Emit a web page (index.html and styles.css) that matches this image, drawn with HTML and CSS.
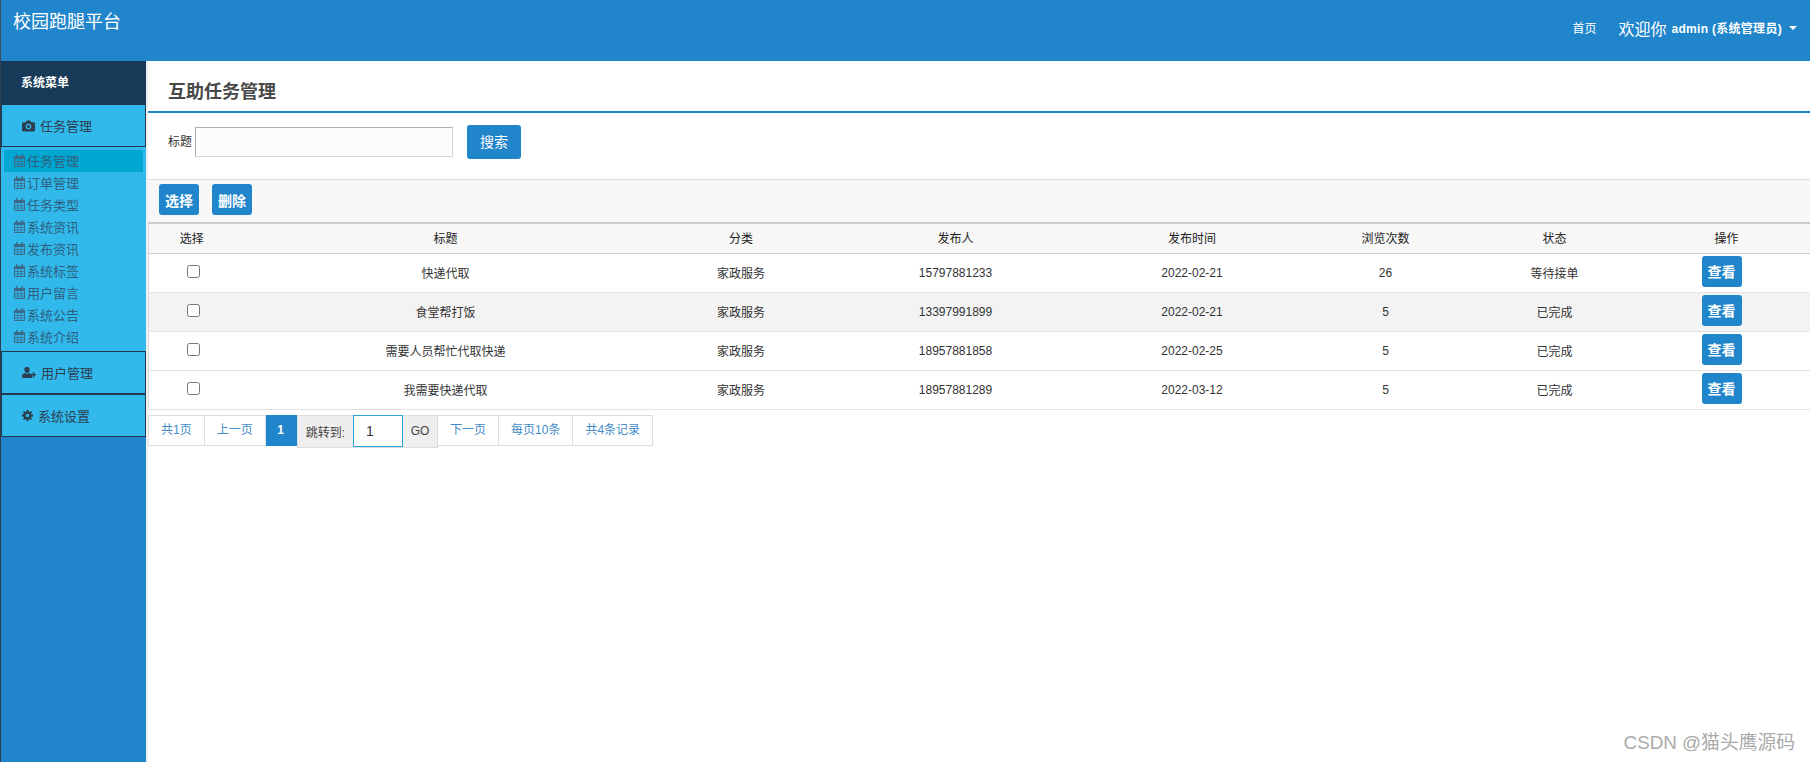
FILE: index.html
```html
<!DOCTYPE html>
<html lang="zh-CN">
<head>
    <meta charset="UTF-8">
    <title>校园跑腿平台</title>
    <link rel="stylesheet" href="styles.css">
</head>
<body>
    <svg class="icon-defs" width="0" height="0">
        <symbol id="i-cal" viewBox="0 0 11 13">
            <path d="M.5 2.500h10v10H.5z" fill="none" stroke="currentColor"/>
            <path d="M0 2h11v3H0z" fill="currentColor"/>
            <path d="M.5 7.500h10M.5 10h10M3.800 5v7.500M7.200 5v7.500" fill="none" stroke="currentColor" stroke-width=".8"/>
            <path d="M2 0h1.500v2H2zM7.500 0H9v2H7.500z" fill="currentColor"/>
        </symbol>
    </svg>

    <header class="topbar">
        <div class="brand">校园跑腿平台</div>
        <div class="top-right">
            <a class="top-link">首页</a>
            <span class="welcome">欢迎你</span>
            <span class="user">admin (系统管理员)</span>
            <span class="caret"></span>
        </div>
    </header>

    <div class="wrap">
        <aside class="sidebar">
            <div class="side-title">系统菜单</div>
            <div class="side-group">
                <svg class="g-icon" width="13" height="12" viewBox="0 0 14 12"><path fill-rule="evenodd" d="M1.500 2H4l1-2h4l1 2h2.500A1.500 1.500 0 0 1 14 3.500v7a1.500 1.500 0 0 1-1.500 1.500h-11A1.500 1.500 0 0 1 0 10.500v-7A1.500 1.500 0 0 1 1.500 2zM7 3.500a3 3 0 1 0 0 6 3 3 0 0 0 0-6zm0 1.300a1.700 1.700 0 1 1 0 3.400 1.700 1.700 0 0 1 0-3.400z" fill="currentColor"/></svg>
                <span>任务管理</span>
            </div>
            <ul class="side-list">
                <li class="active"><svg class="cal"><use href="#i-cal"/></svg>任务管理</li>
                <li><svg class="cal"><use href="#i-cal"/></svg>订单管理</li>
                <li><svg class="cal"><use href="#i-cal"/></svg>任务类型</li>
                <li><svg class="cal"><use href="#i-cal"/></svg>系统资讯</li>
                <li><svg class="cal"><use href="#i-cal"/></svg>发布资讯</li>
                <li><svg class="cal"><use href="#i-cal"/></svg>系统标签</li>
                <li><svg class="cal"><use href="#i-cal"/></svg>用户留言</li>
                <li><svg class="cal"><use href="#i-cal"/></svg>系统公告</li>
                <li><svg class="cal"><use href="#i-cal"/></svg>系统介绍</li>
            </ul>
            <div class="side-group">
                <svg class="g-icon" width="14" height="11" viewBox="0 0 14 11"><path d="M5 0a2.600 2.600 0 0 1 2.600 2.800C7.600 4.500 6.500 6 5 6S2.400 4.500 2.400 2.800A2.600 2.600 0 0 1 5 0zM0 9.500c0-2 1.300-3 2.700-3.400.6.500 1.400.8 2.300.8s1.700-.3 2.300-.8c.6.200 1.100.4 1.500.8v1.300H10V11H1.500C.6 11 0 10.400 0 9.500zM10.800 5h1.400v2H14v1.400h-1.800v2h-1.400v-2H9V7h1.800z" fill="currentColor"/></svg>
                <span>用户管理</span>
            </div>
            <div class="side-group">
                <svg class="g-icon" width="11" height="11" viewBox="0 0 12 12"><path fill-rule="evenodd" d="M5 0h2l.3 1.700 1 .4L9.800 1.100l1.100 1.100-1 1.500.4 1L12 5v2l-1.700.3-.4 1 1 1.500-1.100 1.100-1.500-1-1 .4L7 12H5l-.3-1.700-1-.4-1.500 1-1.100-1.100 1-1.500-.4-1L0 7V5l1.700-.3.4-1-1-1.500 1.100-1.100 1.500 1 1-.4zM6 4a2 2 0 1 0 0 4 2 2 0 0 0 0-4z" fill="currentColor"/></svg>
                <span>系统设置</span>
            </div>
        </aside>

        <main class="content">
            <h2 class="page-title">互助任务管理</h2>

            <form class="search-row">
                <label class="search-label">标题</label>
                <input class="search-input" type="text">
                <button type="button" class="btn btn-search">搜索</button>
            </form>

            <div class="toolbar">
                <button type="button" class="btn btn-bold">选择</button>
                <button type="button" class="btn btn-bold">删除</button>
            </div>

            <table class="data-table">
                <colgroup>
                    <col class="c1"><col class="c2"><col class="c3"><col class="c4">
                    <col class="c5"><col class="c6"><col class="c7"><col class="c8">
                </colgroup>
                <thead>
                    <tr>
                        <th>选择</th><th>标题</th><th>分类</th><th>发布人</th>
                        <th>发布时间</th><th>浏览次数</th><th>状态</th><th>操作</th>
                    </tr>
                </thead>
                <tbody>
                    <tr>
                        <td><input class="check" type="checkbox"></td>
                        <td>快递代取</td><td>家政服务</td><td>15797881233</td>
                        <td>2022-02-21</td><td>26</td><td>等待接单</td>
                        <td><button type="button" class="btn btn-bold btn-view">查看</button></td>
                    </tr>
                    <tr>
                        <td><input class="check" type="checkbox"></td>
                        <td>食堂帮打饭</td><td>家政服务</td><td>13397991899</td>
                        <td>2022-02-21</td><td>5</td><td>已完成</td>
                        <td><button type="button" class="btn btn-bold btn-view">查看</button></td>
                    </tr>
                    <tr>
                        <td><input class="check" type="checkbox"></td>
                        <td>需要人员帮忙代取快递</td><td>家政服务</td><td>18957881858</td>
                        <td>2022-02-25</td><td>5</td><td>已完成</td>
                        <td><button type="button" class="btn btn-bold btn-view">查看</button></td>
                    </tr>
                    <tr>
                        <td><input class="check" type="checkbox"></td>
                        <td>我需要快递代取</td><td>家政服务</td><td>18957881289</td>
                        <td>2022-03-12</td><td>5</td><td>已完成</td>
                        <td><button type="button" class="btn btn-bold btn-view">查看</button></td>
                    </tr>
                </tbody>
            </table>

            <div class="pager">
                <a class="pg pg-first">共1页</a>
                <a class="pg">上一页</a>
                <a class="pg pg-current">1</a>
                <div class="pg-jump">
                    <span>跳转到:</span>
                    <input class="pg-input" type="text" value="1">
                    <span class="pg-go">GO</span>
                </div>
                <a class="pg">下一页</a>
                <a class="pg">每页10条</a>
                <a class="pg">共4条记录</a>
            </div>
        </main>
    </div>

    <div class="watermark">CSDN @猫头鹰源码</div>
</body>
</html>
```

FILE: styles.css
```css
* {
    box-sizing: border-box;
}

html, body {
    height: 762px;
    overflow: hidden;
}

body {
    margin: 0;
    font-family: "Liberation Sans", "Noto Sans CJK SC", sans-serif;
    font-size: 12px;
    color: #333;
    background-color: #fff;
}

.icon-defs {
    position: absolute;
    top: 0;
    left: 0;
}

.topbar {
    height: 61px;
    display: flex;
    justify-content: space-between;
    background-color: #2185cb;
    border-left: 1px solid #3a4a5a;
    color: #fff;
}

.brand {
    padding: 9px 0 0 12px;
    font-size: 18px;
    line-height: 26px;
}

.top-right {
    display: flex;
    align-items: center;
    height: 55px;
    padding-right: 13px;
}

.top-link {
    font-size: 12px;
    margin-right: 22px;
}

.welcome {
    font-size: 16px;
    margin-right: 5px;
}

.user {
    font-size: 12px;
    font-weight: bold;
    letter-spacing: .3px;
}

.caret {
    margin-left: 7px;
    border-top: 4px solid #fff;
    border-left: 4px solid transparent;
    border-right: 4px solid transparent;
}

.wrap {
    display: flex;
    height: 701px;
}

.sidebar {
    width: 148px;
    flex: none;
    background-color: #2185cb;
    border-left: 1px solid #2d3e50;
    border-right: 2px solid #f0f0f0;
}

.side-title {
    height: 43px;
    padding-left: 20px;
    line-height: 44px;
    font-size: 12px;
    font-weight: bold;
    color: #fff;
    background-color: #163a57;
}

.side-group {
    display: flex;
    align-items: center;
    gap: 5px;
    height: 43px;
    padding-left: 20px;
    font-size: 13px;
    color: #2d3e50;
    background-color: #31b9ec;
    border: 1px solid #22384f;
}

.side-list {
    margin: 0;
    padding: 3px 3px 3px;
    list-style: none;
    background-color: #31b9ec;
}

.side-list li {
    display: flex;
    align-items: center;
    gap: 2px;
    height: 22px;
    padding: 0 0 2px 10px;
    font-size: 13px;
    color: #2f5f80;
}

.side-list li.active {
    background-color: #00a7d0;
}

.cal {
    width: 11px;
    height: 13px;
    color: #3c6a8a;
}

.content {
    flex: 1;
    min-width: 0;
}

.page-title {
    height: 52px;
    margin: 0;
    padding: 19px 0 0 20px;
    font-size: 18px;
    line-height: 24px;
    font-weight: bold;
    color: #484848;
    border-bottom: 2px solid #2185cb;
}

.search-row {
    display: flex;
    align-items: center;
    height: 66px;
    padding: 0 0 8px 20px;
}

.search-label {
    margin-right: 3px;
    padding-bottom: 4px;
    color: #333;
}

.search-input {
    width: 258px;
    height: 30px;
    background-color: #fcfcfc;
    border: 1px solid #d5d5d5;
    border-top-color: #b0b0b0;
    border-left-color: #b0b0b0;
}

.btn {
    height: 31px;
    padding: 0;
    border: none;
    border-radius: 3px;
    color: #fff;
    background-color: #2185cb;
    font-family: inherit;
    font-size: 14px;
}

.btn-search {
    width: 54px;
    height: 34px;
    margin-left: 14px;
    padding-bottom: 2px;
}

.btn-bold {
    width: 40px;
    font-weight: bold;
}

.toolbar {
    display: flex;
    gap: 13px;
    height: 43px;
    padding: 4px 0 0 11px;
    background-color: #f7f7f7;
    border-top: 1px solid #ddd;
}

.data-table {
    width: 1668px;
    table-layout: fixed;
    border-collapse: collapse;
    border-top: 2px solid #ccc;
    border-left: 1px solid #ddd;
}

.c1 { width: 86px; }
.c2 { width: 422px; }
.c3 { width: 169px; }
.c4 { width: 260px; }
.c5 { width: 213px; }
.c6 { width: 174px; }
.c7 { width: 164px; }
.c8 { width: 180px; }

.data-table th {
    height: 30px;
    padding: 0 0 2px;
    font-weight: normal;
    color: #222;
    background-color: #f7f7f7;
    border-bottom: 1px solid #ccc;
}

.data-table td {
    height: 39px;
    padding: 0;
    text-align: center;
    color: #333;
    border-bottom: 1px solid #e2e2e2;
}

.data-table tbody tr:nth-child(2) td {
    background-color: #f3f3f3;
}

.check {
    width: 13px;
    height: 13px;
    margin: 0 0 3px 3px;
}

.btn-view {
    display: block;
    margin: 0 auto 3px 65px;
}

.pager {
    display: flex;
    align-items: flex-start;
    margin-top: 5px;
    color: #428bca;
}

.pg {
    height: 31px;
    line-height: 29px;
    padding: 0 12px;
    border: 1px solid #ddd;
    border-left: none;
}

.pg-first {
    border-left: 1px solid #ddd;
}

.pg-current {
    width: 31px;
    padding: 0;
    text-align: center;
    font-weight: bold;
    color: #fff;
    background-color: #2185cb;
    border-color: #2185cb;
}

.pg-jump {
    display: flex;
    align-items: center;
    height: 33px;
    padding-left: 8px;
    color: #444;
    background-color: #eee;
    border: 1px solid #ddd;
}

.pg-input {
    width: 50px;
    height: 32px;
    margin-left: 8px;
    padding-left: 12px;
    font-family: inherit;
    font-size: 14px;
    color: #333;
    background-color: #fff;
    border: 1px solid #2ea3d9;
    outline: none;
}

.pg-go {
    width: 34px;
    text-align: center;
}

.watermark {
    position: absolute;
    right: 15px;
    bottom: 8px;
    font-size: 18.800px;
    color: #aaa;
}
```
